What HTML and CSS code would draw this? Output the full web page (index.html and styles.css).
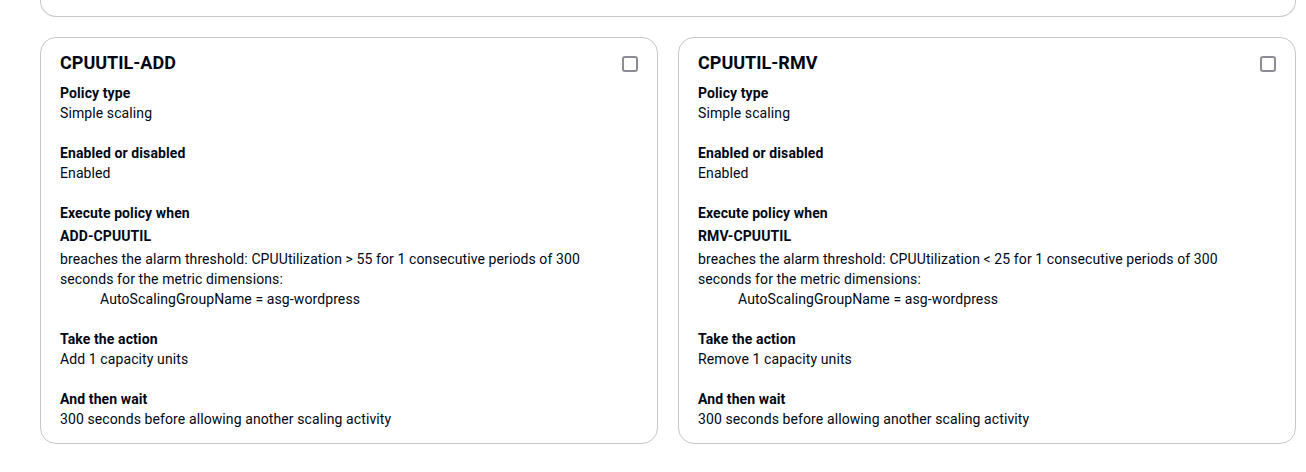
FILE: index.html
```html
<!DOCTYPE html>
<html>
<head>
<meta charset="utf-8">
<link rel="stylesheet" href="styles.css">
</head>
<body>
<div class="page">
  <div class="top-card"></div>
  <div class="grid">
    <div class="card">
      <div class="card-head">
        <h2 class="title">CPUUTIL-ADD</h2>
        <span class="checkbox"></span>
      </div>
      <div class="field">
        <div class="label">Policy type</div>
        <div class="value">Simple scaling</div>
      </div>
      <div class="field">
        <div class="label">Enabled or disabled</div>
        <div class="value">Enabled</div>
      </div>
      <div class="field">
        <div class="label">Execute policy when</div>
        <div class="alarm">ADD-CPUUTIL</div>
        <div class="value desc">breaches the alarm threshold: CPUUtilization &gt; 55 for 1 consecutive periods of 300 seconds for the metric dimensions:</div>
        <div class="value indent">AutoScalingGroupName = asg-wordpress</div>
      </div>
      <div class="field">
        <div class="label">Take the action</div>
        <div class="value">Add 1 capacity units</div>
      </div>
      <div class="field">
        <div class="label">And then wait</div>
        <div class="value">300 seconds before allowing another scaling activity</div>
      </div>
    </div>
    <div class="card">
      <div class="card-head">
        <h2 class="title">CPUUTIL-RMV</h2>
        <span class="checkbox"></span>
      </div>
      <div class="field">
        <div class="label">Policy type</div>
        <div class="value">Simple scaling</div>
      </div>
      <div class="field">
        <div class="label">Enabled or disabled</div>
        <div class="value">Enabled</div>
      </div>
      <div class="field">
        <div class="label">Execute policy when</div>
        <div class="alarm">RMV-CPUUTIL</div>
        <div class="value desc">breaches the alarm threshold: CPUUtilization &lt; 25 for 1 consecutive periods of 300 seconds for the metric dimensions:</div>
        <div class="value indent">AutoScalingGroupName = asg-wordpress</div>
      </div>
      <div class="field">
        <div class="label">Take the action</div>
        <div class="value">Remove 1 capacity units</div>
      </div>
      <div class="field">
        <div class="label">And then wait</div>
        <div class="value">300 seconds before allowing another scaling activity</div>
      </div>
    </div>
  </div>
</div>
</body>
</html>
```
FILE: styles.css
```css
* { box-sizing: border-box; }
html, body {
  margin: 0;
  padding: 0;
  background: #ffffff;
}
body {
  font-family: Roboto, "Noto Sans", sans-serif;
  font-size: 14px;
  line-height: 20px;
  letter-spacing: 0.1px;
  color: #000716;
}
.page {
  padding: 0 10px 0 40px;
}
.top-card {
  height: 17px;
  border: 1px solid #c6c6cd;
  border-top: none;
  border-radius: 0 0 16px 16px;
}
.grid {
  margin-top: 20px;
  display: grid;
  grid-template-columns: 1fr 1fr;
  gap: 20px;
}
.card {
  border: 1px solid #c6c6cd;
  border-radius: 16px;
  padding: 13px 19px 14px 19px;
}
.card-head {
  display: flex;
  justify-content: space-between;
  align-items: flex-start;
  margin-bottom: 9px;
}
.title {
  margin: 1px 0 0 0;
  font-size: 18px;
  line-height: 22px;
  font-weight: 700;
  letter-spacing: 0;
}
.checkbox {
  width: 16px;
  height: 16px;
  border: 2px solid #8c8c94;
  border-radius: 3px;
  margin-top: 5px;
}
.field {
  margin-bottom: 20px;
}
.field:last-child {
  margin-bottom: 0;
}
.label {
  font-weight: 700;
}
.alarm {
  font-weight: 700;
  margin-top: 3px;
}
.desc {
  margin-top: 3px;
  max-width: 540px;
}
.indent {
  padding-left: 40px;
}
```
